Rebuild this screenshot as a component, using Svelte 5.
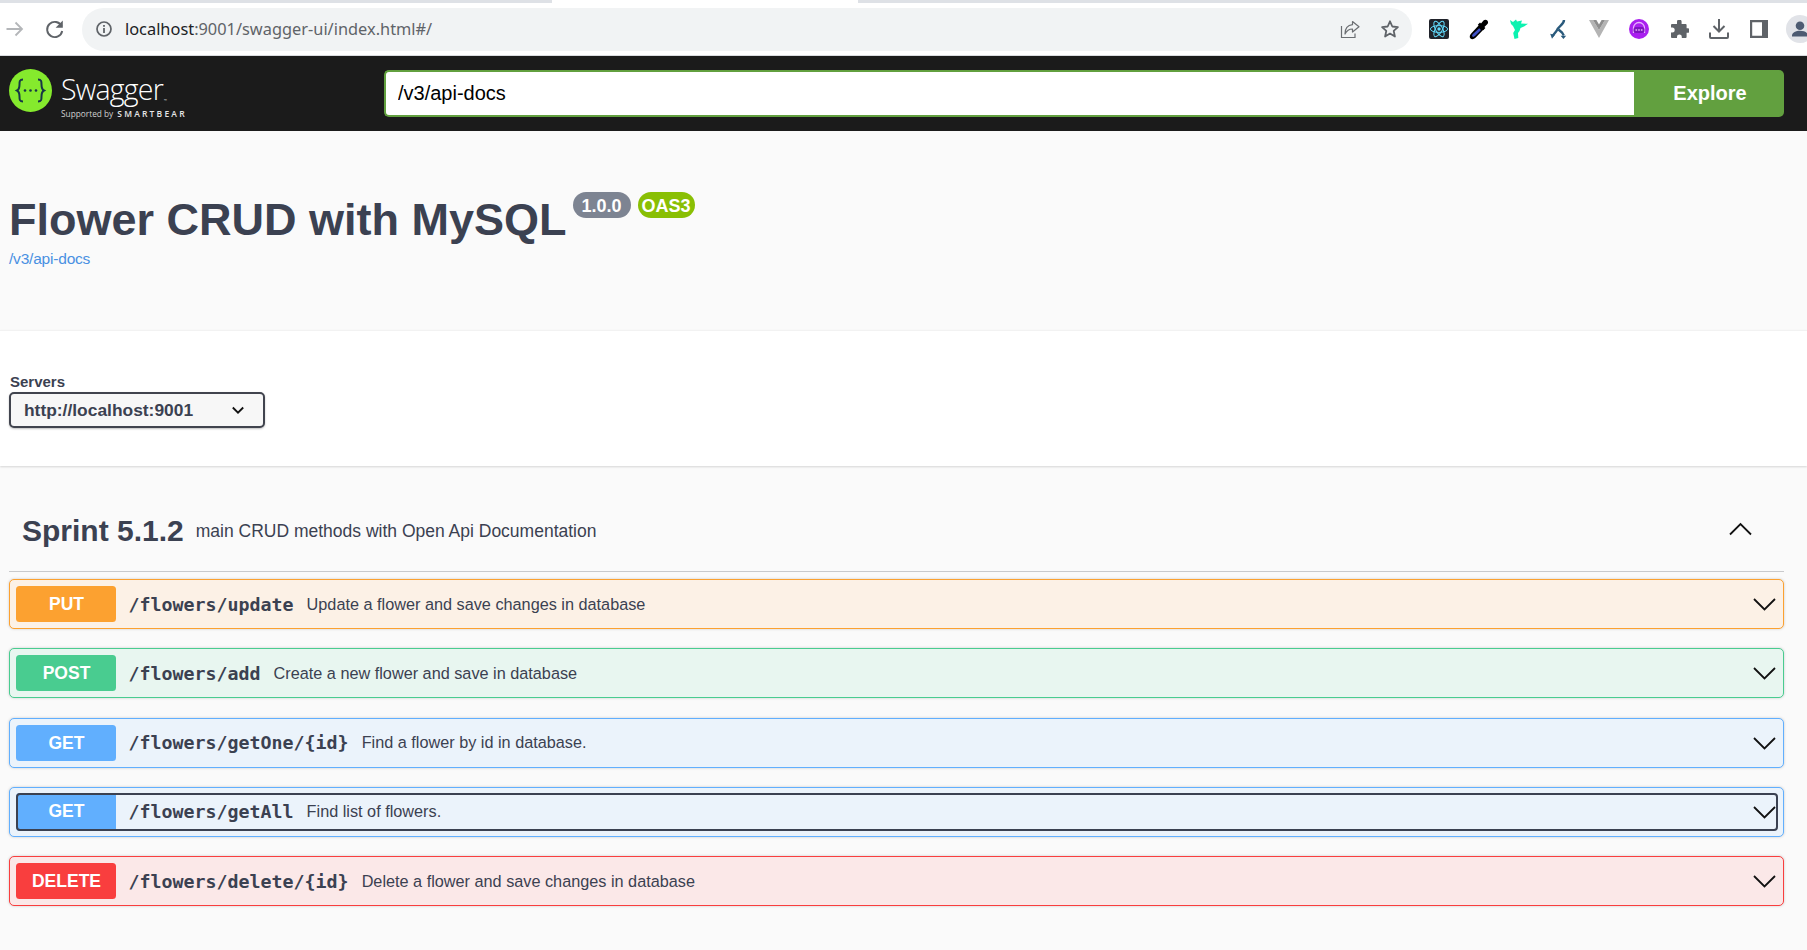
<script>
  const ops = [
    { m: 'PUT', c: 'put', path: '/flowers/update', d: 'Update a flower and save changes in database' },
    { m: 'POST', c: 'post', path: '/flowers/add', d: 'Create a new flower and save in database' },
    { m: 'GET', c: 'get', path: '/flowers/getOne/{id}', d: 'Find a flower by id in database.' },
    { m: 'GET', c: 'get', path: '/flowers/getAll', d: 'Find list of flowers.', focus: true },
    { m: 'DELETE', c: 'del', path: '/flowers/delete/{id}', d: 'Delete a flower and save changes in database' }
  ];
</script>

<div class="page">
  <div class="tabstrip"><span class="seg s1"></span><span class="gap1"></span><span class="seg s2"></span></div>
  <div class="toolbar">
    <svg class="nav" width="22" height="22" viewBox="0 0 22 22"><path d="M2.500 11H18M11.500 4.500 18 11l-6.500 6.500" fill="none" stroke="#b4b6b9" stroke-width="1.800"/></svg>
    <svg class="reload" width="22" height="22" viewBox="0 0 22 22"><path d="M17.600 8.200A7.600 7.600 0 1 0 18.200 13" fill="none" stroke="#5f6368" stroke-width="1.900"/><path d="M18.800 2.600v7.200h-7.200z" fill="#5f6368"/></svg>
    <div class="omni">
      <svg width="18" height="18" viewBox="0 0 18 18"><circle cx="9" cy="9" r="7" fill="none" stroke="#5f6368" stroke-width="1.700"/><rect x="8.100" y="8" width="1.800" height="5" fill="#5f6368"/><rect x="8.100" y="5" width="1.800" height="1.800" fill="#5f6368"/></svg>
      <span class="url"><b>localhost</b>:9001/swagger-ui/index.html#/</span>
      <span class="grow"></span>
      <svg class="share" width="22" height="22" viewBox="0 0 22 22"><path d="M2.500 8v11.500h13.500v-4" fill="none" stroke="#6b6e72" stroke-width="1.200"/><path d="M13.500 3.500 20 8.800l-6.500 5.200v-3C9.500 11 7.500 13 6 16c0-5 2.500-8.700 7.500-9.300z" fill="none" stroke="#6b6e72" stroke-width="1.200" stroke-linejoin="round"/></svg>
      <svg class="star" width="20" height="20" viewBox="0 0 20 20"><path d="m10 2.300 2.300 5.200 5.600.6-4.200 3.800 1.200 5.600L10 14.600l-4.900 2.900 1.200-5.600-4.200-3.800 5.600-.6z" fill="none" stroke="#5f6368" stroke-width="1.800" stroke-linejoin="round"/></svg>
    </div>
    <div class="exts">
      <svg width="20" height="20" viewBox="0 0 20 20"><rect width="20" height="20" rx="2" fill="#20232a"/><g fill="none" stroke="#61dafb" stroke-width="1"><ellipse cx="10" cy="10" rx="8.600" ry="3.400"/><ellipse cx="10" cy="10" rx="8.600" ry="3.400" transform="rotate(60 10 10)"/><ellipse cx="10" cy="10" rx="8.600" ry="3.400" transform="rotate(120 10 10)"/></g><circle cx="10" cy="10" r="1.700" fill="#61dafb"/></svg>
      <svg width="20" height="21" viewBox="0 0 20 21"><path d="M10.500 5.500 15 10 6.500 18.800C5 20.300 2.800 20.800 1.500 19.500S.7 16 2.200 14.500z" fill="#000"/><path d="M10.200 9.300 12 11.100 6 17.100c-.8.800-2 1.100-2.600.5s-.3-1.800.5-2.600z" fill="#3f51c5"/><path d="M8.800 5.800 11 3.600 12 4.600 14.500 1.600c1-1.100 2.700-1.200 3.800-.1s1 2.800-.1 3.800L15.400 8l1 1L14.200 11.200z" fill="#000"/></svg>
      <svg width="18" height="20" viewBox="0 0 18 20"><path d="M0 1 3 3 6 .5 7 2.500 12 1.500 11 4.500 18 4.800 14 7.500 10.500 9 9.500 12 8 14 8.300 19 4.500 20 3.200 14 5 11 3 7 1 5z" fill="#0cf2b0"/></svg>
      <svg width="18" height="21" viewBox="0 0 18 21"><g fill="none" stroke="#2a5a7c" stroke-width="2.400"><path d="M14 1c0 5-6 6-7.500 11L2.500 17"/><path d="M8.500 10.500 12 13.500l1.800 3"/></g><path d="M.2 14.800 4.800 16 2 19.800z M10.600 16.800h5.600L13.400 20z" fill="#2a5a7c"/></svg>
      <svg width="20" height="18" viewBox="0 0 20 18"><path d="M0 0h4l6 10L16 0h4L10 18z" fill="#b4b4b4"/><path d="M4 0h3.400L10 4.600 12.600 0H16l-6 10z" fill="#8e8e8e"/></svg>
      <svg width="20" height="20" viewBox="0 0 20 20"><circle cx="10" cy="10" r="10" fill="#a91fef"/><path d="M4.500 14V9a5.500 5.500 0 0 1 11 0v5" fill="none" stroke="#e8b5ff" stroke-width="1.300"/><rect x="4.500" y="8" width="11" height="6" rx="2.500" fill="#7d16bd"/><g fill="#f5dcff"><rect x="6.500" y="10.400" width="1.600" height="1.200"/><rect x="9.200" y="10.400" width="1.600" height="1.200"/><rect x="11.900" y="10.400" width="1.600" height="1.200"/></g></svg>
      <svg width="19" height="19" viewBox="0 0 19 19"><path d="M7 1.800a2.300 2.300 0 0 1 4.600 0V4h4a1 1 0 0 1 1 1v3.200h1a2.300 2.300 0 0 1 0 4.600h-1V17a1 1 0 0 1-1 1H11.800v-1.200a2.400 2.400 0 0 0-4.800 0V18H2a1 1 0 0 1-1-1v-4.400h1.200a2.500 2.500 0 0 0 0-5H1V5a1 1 0 0 1 1-1h5z" fill="#5f6368"/></svg>
      <svg width="20" height="20" viewBox="0 0 20 20"><path d="M10 0v12M4.500 7l5.500 5.500L15.500 7" fill="none" stroke="#5f6368" stroke-width="2"/><path d="M1 13.500V18a1 1 0 0 0 1 1h16a1 1 0 0 0 1-1v-4.500" fill="none" stroke="#5f6368" stroke-width="2"/></svg>
      <svg width="18" height="18" viewBox="0 0 18 18"><path fill-rule="evenodd" d="M0 0h18v18H0zM2.200 2.200v13.600H12V2.200z" fill="#5f6368"/></svg>
    </div>
    <div class="avatar"><svg width="28" height="28" viewBox="0 0 28 28"><circle cx="14" cy="14" r="14" fill="#e1e3e8"/><circle cx="14" cy="10.800" r="4.300" fill="#4d5b72"/><path d="M6 20.500c0-3 4-4.700 8-4.700s8 1.700 8 4.700v1H6z" fill="#4d5b72"/></svg></div>
  </div>

  <header class="topbar">
    <div class="logo">
      <svg width="43" height="43" viewBox="0 0 43 43"><circle cx="21.500" cy="21.500" r="21.500" fill="#85ea2d"/><g fill="none" stroke="#173647" stroke-width="2"><path d="M14 10.500c-3.500 0-3.500 2-3.500 5 0 3-.5 5-2.500 6 2 1 2.500 3 2.500 6 0 3 0 5 3.500 5"/><path d="M29 10.500c3.500 0 3.500 2 3.500 5 0 3 .5 5 2.500 6-2 1-2.500 3-2.500 6 0 3 0 5-3.500 5"/></g><g fill="#173647"><circle cx="16" cy="21.500" r="1.300"/><circle cx="21.500" cy="21.500" r="1.300"/><circle cx="27" cy="21.500" r="1.300"/></g></svg>
      <div class="brand">
        <div class="swagger">Swagger<span class="tm">™</span></div>
        <div class="support"><span class="sb">Supported by</span><span class="bear">SMARTBEAR</span></div>
      </div>
    </div>
    <div class="search">
      <input value="/v3/api-docs" aria-label="url" />
      <button>Explore</button>
    </div>
  </header>

  <section class="info">
    <div class="titlerow">
      <h1>Flower CRUD with MySQL</h1>
      <span class="pill ver">1.0.0</span>
      <span class="pill oas">OAS3</span>
    </div>
    <a class="doc" href="#/">/v3/api-docs</a>
  </section>

  <section class="servers">
    <div class="lbl">Servers</div>
    <div class="select">
      <span>http://localhost:9001</span>
      <svg width="14" height="14" viewBox="0 0 14 14"><path d="M1.800 4.500 7 9.700l5.200-5.200" fill="none" stroke="#111" stroke-width="1.800"/></svg>
    </div>
  </section>

  <section class="api">
    <div class="taghead">
      <span class="tag">Sprint 5.1.2</span>
      <span class="tagdesc">main CRUD methods with Open Api Documentation</span>
      <span class="grow"></span>
      <svg class="up" width="24" height="14" viewBox="0 0 24 14"><path d="M2 12.500 12.500 2 23 12.500" fill="none" stroke="#111" stroke-width="1.800"/></svg>
    </div>
    {#each ops as o}
      <div class="op {o.c}">
        <div class="summary" class:focus={o.focus}>
          <span class="method">{o.m}</span>
          <span class="path">{o.path}</span>
          <span class="desc">{o.d}</span>
          <span class="grow"></span>
          <svg class="down" width="24" height="14" viewBox="0 0 24 14"><path d="M2 2 12.500 12.500 23 2" fill="none" stroke="#111" stroke-width="1.800"/></svg>
        </div>
      </div>
    {/each}
  </section>
</div>

<style>
  :global(body) { margin: 0; background: #fafafa; }
  .page { width: 1807px; height: 950px; overflow: hidden; display: flex; flex-direction: column; font-family: "Liberation Sans", Arial, sans-serif; color: #3b4151; background: #fafafa; }
  .grow { flex: 1; }

  .tabstrip { height: 3px; display: flex; background: #fff; flex: none; }
  .seg { background: #dee1e6; display: block; }
  .s1 { width: 552px; }
  .gap1 { width: 306px; }
  .s2 { flex: 1; }

  .toolbar { height: 52px; flex: none; background: #fff; display: flex; align-items: center; border-bottom: 1px solid #dadce0; }
  .toolbar > * { flex: none; }
  .nav { margin-left: 4px; }
  .reload { margin-left: 18px; }
  .omni { margin-left: 16px; width: 1330px; height: 43px; border-radius: 22px; background: #f1f3f4; display: flex; align-items: center; padding-left: 13px; box-sizing: border-box; }
  .url { margin-left: 12px; font: 400 16.380px "Noto Sans", sans-serif; color: #5f6368; white-space: nowrap; }
  .url b { font-weight: 400; color: #202124; }
  .share { margin-right: 19px; }
  .star { margin-right: 12px; }
  .exts { display: grid; grid-template-columns: repeat(9, 40px); justify-items: center; align-items: center; margin-left: 7px; }
  .avatar { margin-left: 7px; height: 28px; }

  .topbar { height: 74.500px; flex: none; background: #1b1b1b; display: flex; align-items: center; padding-right: 23px; }
  .logo { width: 384px; flex: none; display: flex; align-items: center; padding: 0 0 5px 9px; box-sizing: border-box; color: #fff; }
  .brand { margin-left: 9px; margin-top: 10px; }
  .swagger { font: 300 28.500px/34px "Open Sans", sans-serif; letter-spacing: -0.800px; margin-bottom: -10px; }
  .tm { font-size: 4px; letter-spacing: 0; vertical-align: -2px; margin-left: 1px; }
  .support { display: flex; align-items: baseline; line-height: 12px; }
  .sb { font: 400 8.300px/12px "Open Sans", sans-serif; color: #d0d0d0; }
  .bear { font: 600 8.500px/12px "Open Sans", sans-serif; letter-spacing: 2.200px; margin-left: 4px; color: #e6e6e6; }
  .search { flex: 1; display: flex; height: 47px; }
  input { flex: 1; min-width: 0; height: 47px; box-sizing: border-box; border: 2.500px solid #62a03f; border-right: none; border-radius: 5px 0 0 5px; padding: 0 12px; font: 400 20px "Liberation Sans", sans-serif; color: #000; background: #fff; outline: none; }
  button { width: 150px; height: 47px; border: none; border-radius: 0 5px 5px 0; background: #62a03f; color: #fff; font: 700 20px "Liberation Sans", sans-serif; padding: 0 0 0 2px; }

  .info { height: 199px; flex: none; box-sizing: border-box; padding: 61px 9px 0; background: #fafafa; }
  .titlerow { display: flex; align-items: flex-start; }
  h1 { margin: 0; font: 700 45px/56px "Liberation Sans", sans-serif; color: #3b4151; }
  .pill { color: #fff; font: 700 18px/28px "Liberation Sans", sans-serif; height: 26px; border-radius: 14px; text-align: center; }
  .ver { background: #7d8492; margin-left: 6px; width: 58px; }
  .oas { background: #89bf04; margin-left: 7px; width: 57px; }
  .doc { display: block; margin-top: 1px; font: 400 15.500px/20px "Liberation Sans", sans-serif; color: #4990e2; text-decoration: none; letter-spacing: -0.200px; }

  .servers { height: 136px; flex: none; box-sizing: border-box; background: #fff; padding: 42px 9px 0; box-shadow: 0 1px 2px rgba(0,0,0,.15); border-top: 1px solid #f2f2f2; }
  .lbl { font: 700 15px/17px "Liberation Sans", sans-serif; color: #3b4151; margin-left: 1px; }
  .select { margin-top: 2px; width: 256px; height: 36px; box-sizing: border-box; border: 2.300px solid #41444e; border-radius: 5px; background: #f7f7f7; display: flex; align-items: center; justify-content: space-between; padding: 1px 18px 0 13px; font: 700 17.400px "Liberation Sans", sans-serif; box-shadow: 0 1px 2px rgba(0,0,0,.25); color: #3b4151; }

  .api { padding: 0 23px 0 9px; }
  .taghead { height: 106.500px; display: flex; align-items: center; box-sizing: border-box; padding: 26px 32px 0 13px; border-bottom: 1px solid #c9cacc; margin-bottom: 7px; }
  .tag { font: 700 30px "Liberation Sans", sans-serif; color: #3b4151; }
  .tagdesc { margin-left: 12px; font: 400 17.500px "Liberation Sans", sans-serif; color: #3b4151; }
  .up { margin-top: -5px; }
  .op { height: 50px; box-sizing: border-box; border: 1.250px solid; border-radius: 5px; margin-bottom: 19.250px; box-shadow: 0 0 3px rgba(0,0,0,.19); display: flex; align-items: center; }
  .put { background: #fcf1e6; border-color: #fca130; }
  .post { background: #e8f6f0; border-color: #49cc90; }
  .get { background: #ebf3fb; border-color: #61affe; }
  .del { background: #fbe8e8; border-color: #f93e3e; }
  .put .method { background: #fca130; }
  .post .method { background: #49cc90; }
  .get .method { background: #61affe; }
  .del .method { background: #f93e3e; }
  .summary { flex: 1; display: flex; align-items: center; margin: 0 5.500px; height: 36px; box-sizing: border-box; border-radius: 3px; }
  .summary.focus { outline: 2.500px solid #3b4151; outline-offset: -2.500px; height: 37.500px; border-radius: 4px; }
  .method { width: 100px; height: 36px; flex: none; box-sizing: border-box; padding-left: 2px; border-radius: 3.500px; color: #fff; text-align: center; font: 700 17.500px/37px "Liberation Sans", sans-serif; }
  .focus .method { height: 37.500px; line-height: 37.500px; border-radius: 4px 0 0 4px; }
  .path { margin-left: 13px; font: 700 18.300px "DejaVu Sans Mono", monospace; color: #3b4151; white-space: nowrap; }
  .desc { margin-left: 13px; font: 400 16.250px "Liberation Sans", sans-serif; color: #3b4151; white-space: nowrap; }
  .down { margin: 0 1.500px 0 0; flex: none; }
</style>
